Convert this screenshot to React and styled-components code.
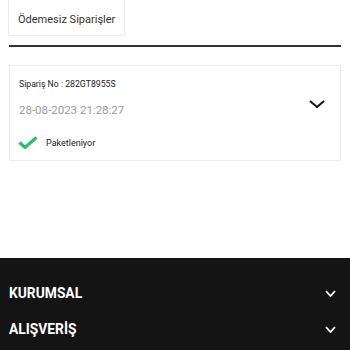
import styled, { createGlobalStyle } from "styled-components";

const Global = createGlobalStyle`
  html, body { margin: 0; padding: 0; background: #fff; }
  body { font-family: Roboto, "Liberation Sans", Arial, sans-serif; }
`;

const Page = styled.div`
  width: 350px; height: 350px; overflow: hidden;
  display: flex; flex-direction: column;
`;

const Content = styled.div`
  padding: 0 9px; height: 258px; box-sizing: border-box;
`;

const Tabs = styled.div`
  display: flex; border-bottom: 2px solid #333; padding-bottom: 9px;
`;

const Tab = styled.div`
  margin-left: -1px; height: 36px; box-sizing: border-box;
  padding: 3px 9px 0; display: flex; align-items: center;
  border: 1px solid #ececec; border-top: none;
  font-size: 11px; color: #333;
`;

const Card = styled.div`
  margin-top: 18px; height: 96px; box-sizing: border-box;
  border: 1px solid #ececec; padding: 11px 9px 0;
  display: flex; justify-content: space-between;
`;

const Info = styled.div`
  display: flex; flex-direction: column;
`;

const OrderNo = styled.div`
  font-size: 8.7px; color: #222; line-height: 14px;
`;

const Date = styled.div`
  margin-top: 11px; font-size: 11.5px; color: #9a9a9a; line-height: 16px;
`;

const Status = styled.div`
  margin-top: 18px; display: flex; align-items: center; gap: 8px;
  font-size: 9px; color: #222; margin-left: -1px;
`;

const Toggle = styled.div`
  display: flex; align-items: flex-start;
  padding-top: 23px; padding-right: 6px;
`;

const Footer = styled.div`
  flex: 1; background: #141414; padding: 25px 14px 0 9px;
  display: flex; flex-direction: column; gap: 16px;
`;

const FooterRow = styled.div`
  display: flex; justify-content: space-between; align-items: center;
  color: #fff; font-weight: 700; font-size: 13.8px; line-height: 20px;
`;

const Chevron = ({ w, h, color, sw }) => (
  <svg width={w} height={h} viewBox={`0 0 ${w} ${h}`} fill="none">
    <path d={`M1 1 L${w / 2} ${h - 1} L${w - 1} 1`} stroke={color} strokeWidth={sw} />
  </svg>
);

const Check = () => (
  <svg width="20" height="13" viewBox="0 0 20 13" fill="none">
    <path d="M1.5 6.5 L7 11.5 L18.5 1.5" stroke="#2ebd6b" strokeWidth="3.2" />
  </svg>
);

export default function App() {
  return (
    <Page>
      <Global />
      <Content>
        <Tabs>
          <Tab>Ödemesiz Siparişler</Tab>
        </Tabs>
        <Card>
          <Info>
            <OrderNo>Sipariş No : 282GT8955S</OrderNo>
            <Date>28-08-2023 21:28:27</Date>
            <Status>
              <Check />
              <span>Paketleniyor</span>
            </Status>
          </Info>
          <Toggle>
            <Chevron w={16} h={8} color="#111" sw={2} />
          </Toggle>
        </Card>
      </Content>
      <Footer>
        <FooterRow>
          KURUMSAL
          <Chevron w={11} h={7} color="#fff" sw={1.8} />
        </FooterRow>
        <FooterRow>
          ALIŞVERİŞ
          <Chevron w={11} h={7} color="#fff" sw={1.8} />
        </FooterRow>
      </Footer>
    </Page>
  );
}
